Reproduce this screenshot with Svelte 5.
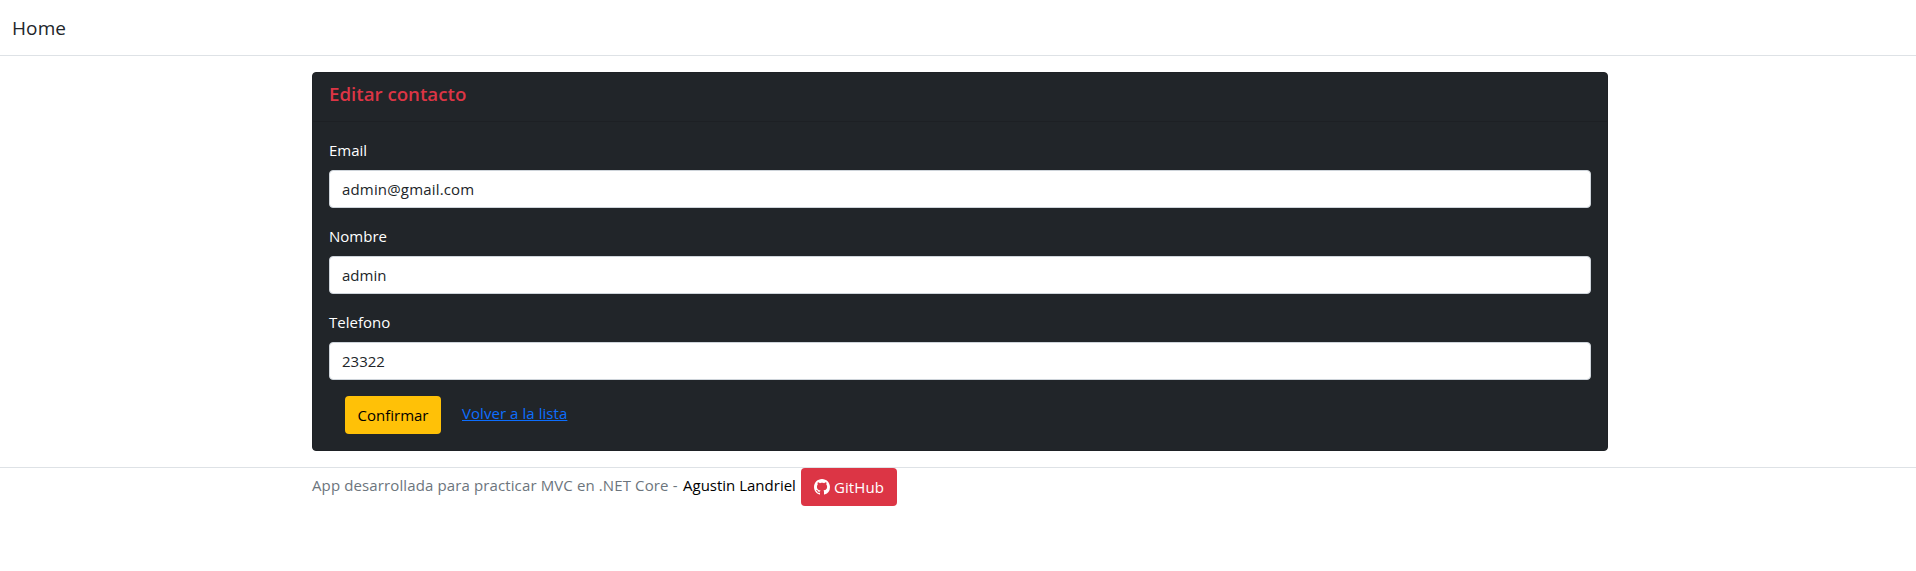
<script>
  let fields = $state([
    { id: 'email', label: 'Email', value: 'admin@gmail.com' },
    { id: 'nombre', label: 'Nombre', value: 'admin' },
    { id: 'telefono', label: 'Telefono', value: '23322' }
  ]);
</script>

<header><a class="brand" href="#home">Home</a></header>

<main class="container">
  <section class="card">
    <div class="card-header"><h5>Editar contacto</h5></div>
    <form class="card-body">
      {#each fields as field (field.id)}
        <div class="group">
          <label for={field.id}>{field.label}</label>
          <input id={field.id} class:wide={field.id === 'email'} type="text" bind:value={field.value} />
        </div>
      {/each}
      <div class="actions">
        <button class="btn warning" type="button"><span>Confirmar</span></button>
        <a class="back" href="#lista">Volver a la lista</a>
      </div>
    </form>
  </section>
</main>

<footer>
  <div class="container foot">
    <span class="muted">App desarrollada para practicar MVC en .NET Core -</span>
    <span class="author">Agustin Landriel</span>
    <a class="btn danger" href="#github">
      <svg width="16" height="16" viewBox="0 0 16 16" fill="currentColor" aria-hidden="true">
        <path d="M8 0C3.58 0 0 3.58 0 8c0 3.54 2.29 6.53 5.47 7.59.4.07.55-.17.55-.38 0-.19-.01-.82-.01-1.49-2.01.37-2.53-.49-2.69-.94-.09-.23-.48-.94-.82-1.13-.28-.15-.68-.52-.01-.53.63-.01 1.08.58 1.23.82.72 1.21 1.87.87 2.33.66.07-.52.28-.87.51-1.07-1.78-.2-3.64-.89-3.64-3.95 0-.87.31-1.59.82-2.15-.08-.2-.36-1.02.08-2.12 0 0 .67-.21 2.2.82.64-.18 1.32-.27 2-.27.68 0 1.36.09 2 .27 1.53-1.04 2.2-.82 2.2-.82.44 1.1.16 1.92.08 2.12.51.56.82 1.27.82 2.15 0 3.07-1.87 3.75-3.65 3.95.29.25.54.73.54 1.48 0 1.07-.01 1.93-.01 2.2 0 .21.15.46.55.38A8.012 8.012 0 0 0 16 8c0-4.42-3.58-8-8-8z" />
      </svg>
      <span>GitHub</span>
    </a>
  </div>
</footer>

<style>
  :global(body) {
    margin: 0;
    background: #fff;
    color: #212529;
    font: 15px/24px 'Open Sans', 'Noto Sans', sans-serif;
  }
  header, footer, .container, .card, input, .btn { box-sizing: border-box; }
  header {
    height: 56px;
    padding: 13px 12px;
    border-bottom: 1px solid #dee2e6;
    margin-bottom: 16px;
  }
  .brand {
    display: block;
    color: #212529;
    text-decoration: none;
    font-size: 19px;
    letter-spacing: 0.1px;
    line-height: 30px;
  }
  .container { width: 1296px; margin: 0 auto; position: relative; left: 2px; }
  .card {
    height: 379px;
    border: 1px solid #1e2125;
    border-radius: 4px;
    background: #212529;
    color: #fff;
  }
  .card-header {
    padding: 7px 16px 17px;
    height: 24px;
    border-bottom: 1px solid #1d2024;
  }
  h5 {
    margin: 0;
    color: #dc3545;
    font-size: 18.7px;
    line-height: 27px;
    font-weight: 600;
  }
  .card-body { padding: 16px; }
  .group { margin-bottom: 16px; }
  label { display: block; margin-bottom: 8px; font-size: 15px; }
  input {
    display: block;
    width: 100%;
    height: 38px;
    padding: 6px 12px;
    border: 1px solid #ced4da;
    border-radius: 4px;
    background: #fff;
    color: #212529;
    font: inherit;
    outline: 0;
  }
  .wide { letter-spacing: 0.17px; }
  .actions { display: flex; align-items: flex-start; gap: 21px; padding-left: 16px; }
  .back { color: #0d6efd; margin-top: 5px; letter-spacing: 0.06px; }
  .btn {
    display: flex;
    align-items: center;
    justify-content: center;
    width: 96px;
    height: 38px;
    padding: 0;
    border: 0;
    border-radius: 4px;
    font: inherit;
    white-space: nowrap;
    text-decoration: none;
  }
  .warning { background: #ffc107; color: #000; }
  .danger { background: #dc3545; color: #fff; gap: 4px; margin-left: auto; letter-spacing: 0.1px; }
  footer { margin-top: 16px; border-top: 1px solid #dee2e6; }
  .foot { display: flex; align-items: flex-start; padding-right: 711px; white-space: nowrap; }
  .foot > span { margin-top: 5px; }
  .muted { color: #6c757d; width: 371px; letter-spacing: 0.12px; }
  .author { color: #000; }
</style>
